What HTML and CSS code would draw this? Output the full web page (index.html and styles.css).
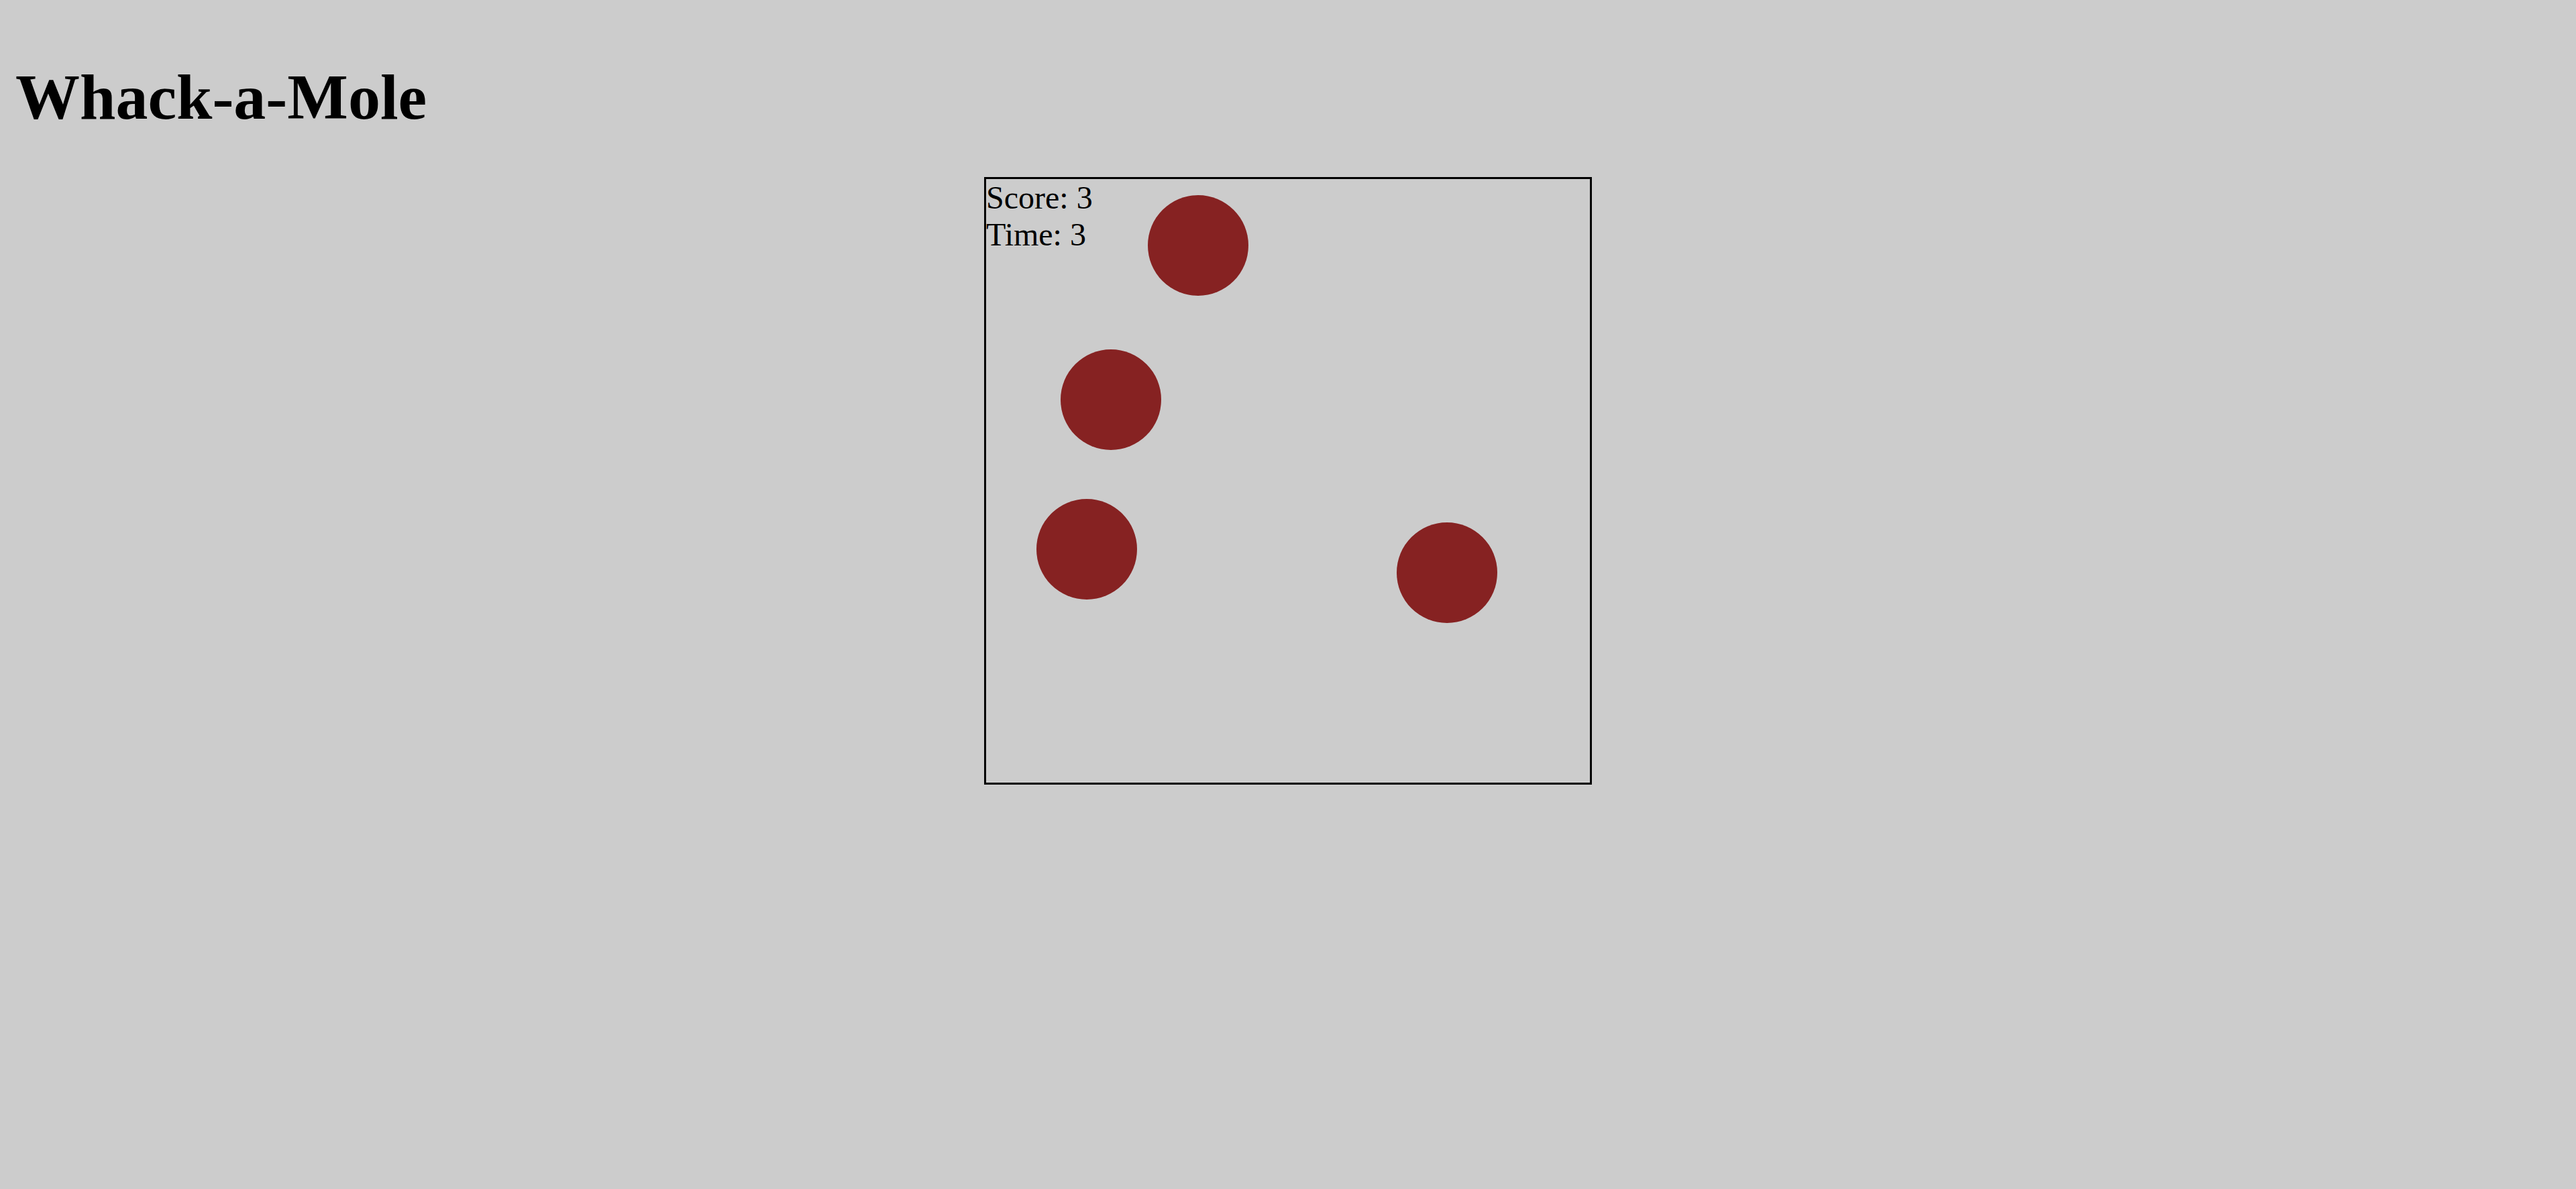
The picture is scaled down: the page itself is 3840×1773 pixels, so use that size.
FILE: index.html
```html
<!DOCTYPE html>
<html lang="en">
<head>
<meta charset="utf-8">
<title>Whack-a-Mole</title>
<link rel="stylesheet" href="styles.css">
</head>
<body>
<h1 class="title">Whack-a-Mole</h1>
<div class="board">
  <div class="stat">Score: 3</div>
  <div class="stat">Time: 3</div>
  <div class="mole" style="left:241px;top:24px"></div>
  <div class="mole" style="left:111px;top:254px"></div>
  <div class="mole" style="left:75px;top:477px"></div>
  <div class="mole" style="left:612px;top:512px"></div>
</div>
</body>
</html>
```

FILE: styles.css
```css
html, body {
  background: #cccccc;
}
body {
  margin: 0;
  padding: 26px 23px 0;
  font-family: "Liberation Serif", "Times New Roman", serif;
  color: #000;
}
.title {
  margin: 0 0 64px;
  padding-top: 64px;
  font-size: 96px;
  line-height: 110px;
  font-weight: bold;
}
.board {
  position: relative;
  width: 900px;
  height: 900px;
  margin: 0 auto;
  border: 3px solid #000;
  font-size: 48px;
}
.stat {
  line-height: normal;
}
.mole {
  position: absolute;
  width: 150px;
  height: 150px;
  border-radius: 50%;
  background: #862222;
}
```
